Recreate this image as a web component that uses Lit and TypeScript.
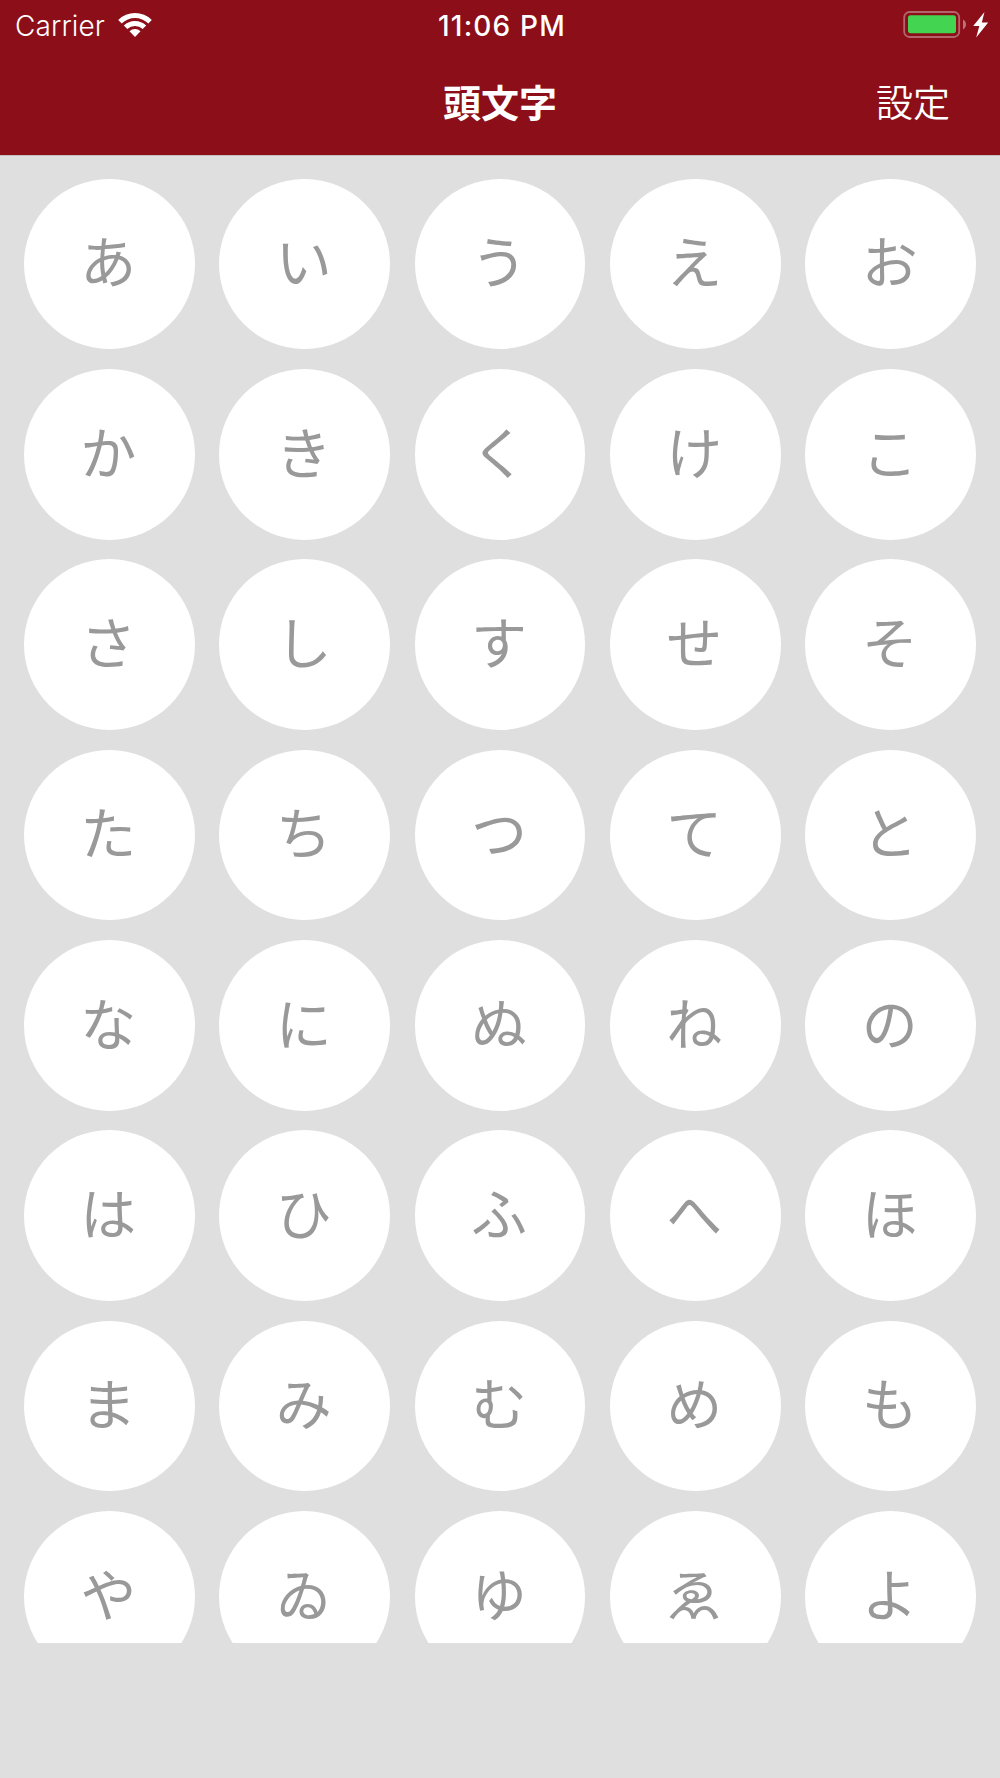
import { LitElement, html, css } from "lit";
import { customElement, property } from "lit/decorators.js";

const KANA = [
  "あいうえお",
  "かきくけこ",
  "さしすせそ",
  "たちつてと",
  "なにぬねの",
  "はひふへほ",
  "まみむめも",
  "やゐゆゑよ",
];

@customElement("status-bar")
class StatusBar extends LitElement {
  static styles = css`
    :host {
      display: grid;
      grid-template-columns: 1fr auto 1fr;
      align-items: center;
      height: 50px;
      padding: 0 11px 0 15px;
      box-sizing: border-box;
      color: #fff;
      font-family: Inter, "Liberation Sans", sans-serif;
      font-size: 28px;
    }
    .left {
      display: flex;
      align-items: center;
      gap: 13px;
    }
    .carrier {
      letter-spacing: 0.1px;
      font-weight: 350;
      padding-top: 1px;
    }
    .time {
      font-weight: 500;
      letter-spacing: 1.2px;
      padding-top: 1px;
    }
    .right {
      display: flex;
      justify-content: flex-end;
    }
    svg {
      display: block;
    }
  `;

  render() {
    return html`
      <div class="left">
        <span class="carrier">Carrier</span>
        <svg width="34" height="25" viewBox="0 0 34 25" fill="#fff">
          <path d="M0.2 6.9 A24 24 0 0 1 33.8 6.9 L30.3 10.4 A19.2 19.2 0 0 0 3.7 10.4 Z" />
          <path d="M5.8 12.6 A16 16 0 0 1 28.2 12.6 L24.7 16.1 A11.1 11.1 0 0 0 9.3 16.1 Z" />
          <path d="M11.5 18.3 A8 8 0 0 1 22.5 18.3 L17 24 Z" />
        </svg>
      </div>
      <div class="time">11:06 PM</div>
      <div class="right">
        <svg width="86" height="28" viewBox="0 0 86 28">
          <rect x="1.2" y="1" width="55" height="25" rx="5.2" fill="none" stroke="#fff" stroke-opacity=".36" stroke-width="1.8" />
          <rect x="5" y="4.2" width="48" height="18" rx="2.6" fill="#43d551" />
          <path d="M60 8.5 Q63 10.1 63 13.5 Q63 16.8 60 18.4 Z" fill="#fff" fill-opacity=".42" />
          <path d="M81.5 1 L70.2 15 H76.3 L73.2 26.6 L85.2 11.5 H78.8 Z" fill="#fff" />
        </svg>
      </div>
    `;
  }
}

@customElement("nav-bar")
class NavBar extends LitElement {
  static styles = css`
    :host {
      display: grid;
      grid-template-columns: 1fr auto 1fr;
      align-items: center;
      height: 101px;
      padding: 0 50px;
      box-sizing: border-box;
      color: #fff;
      font-family: "Noto Sans CJK JP", sans-serif;
    }
    .title {
      grid-column: 2;
      font-size: 38px;
      font-weight: 700;
    }
    .action {
      justify-self: end;
      font-size: 37px;
      font-weight: 350;
    }
  `;

  render() {
    return html`
      <div class="title">頭文字</div>
      <div class="action">設定</div>
    `;
  }
}

@customElement("kana-grid")
class KanaGrid extends LitElement {
  @property({ attribute: false }) rows: string[] = [];

  static styles = css`
    :host {
      display: block;
      height: 1487px;
      overflow: hidden;
    }
    .grid {
      display: grid;
      grid-template-columns: repeat(5, 170.67px);
      grid-auto-rows: 170.67px;
      justify-content: space-between;
      row-gap: 19.67px;
      padding: 22.67px 24px 0;
    }
    .cell {
      display: flex;
      align-items: center;
      justify-content: center;
      box-sizing: border-box;
      padding: 0 2px 9px 0;
      border-radius: 50%;
      background: #fff;
      color: #999;
      font-family: "Noto Sans CJK JP", sans-serif;
      font-size: 56px;
      font-weight: 400;
      line-height: 1;
    }
  `;

  render() {
    return html`
      <div class="grid">
        ${this.rows.map((row) => [...row].map((kana) => html`<div class="cell">${kana}</div>`))}
      </div>
    `;
  }
}

@customElement("app-root")
class AppRoot extends LitElement {
  static styles = css`
    :host {
      display: block;
      height: 1778px;
      overflow: hidden;
      background: #dfdfdf;
    }
    .header {
      height: 156px;
      box-sizing: border-box;
      background: #8b0e19;
      border-bottom: 1px solid #c6bfc1;
    }
  `;

  render() {
    return html`
      <div class="header">
        <status-bar></status-bar>
        <nav-bar></nav-bar>
      </div>
      <kana-grid .rows=${KANA}></kana-grid>
    `;
  }
}
